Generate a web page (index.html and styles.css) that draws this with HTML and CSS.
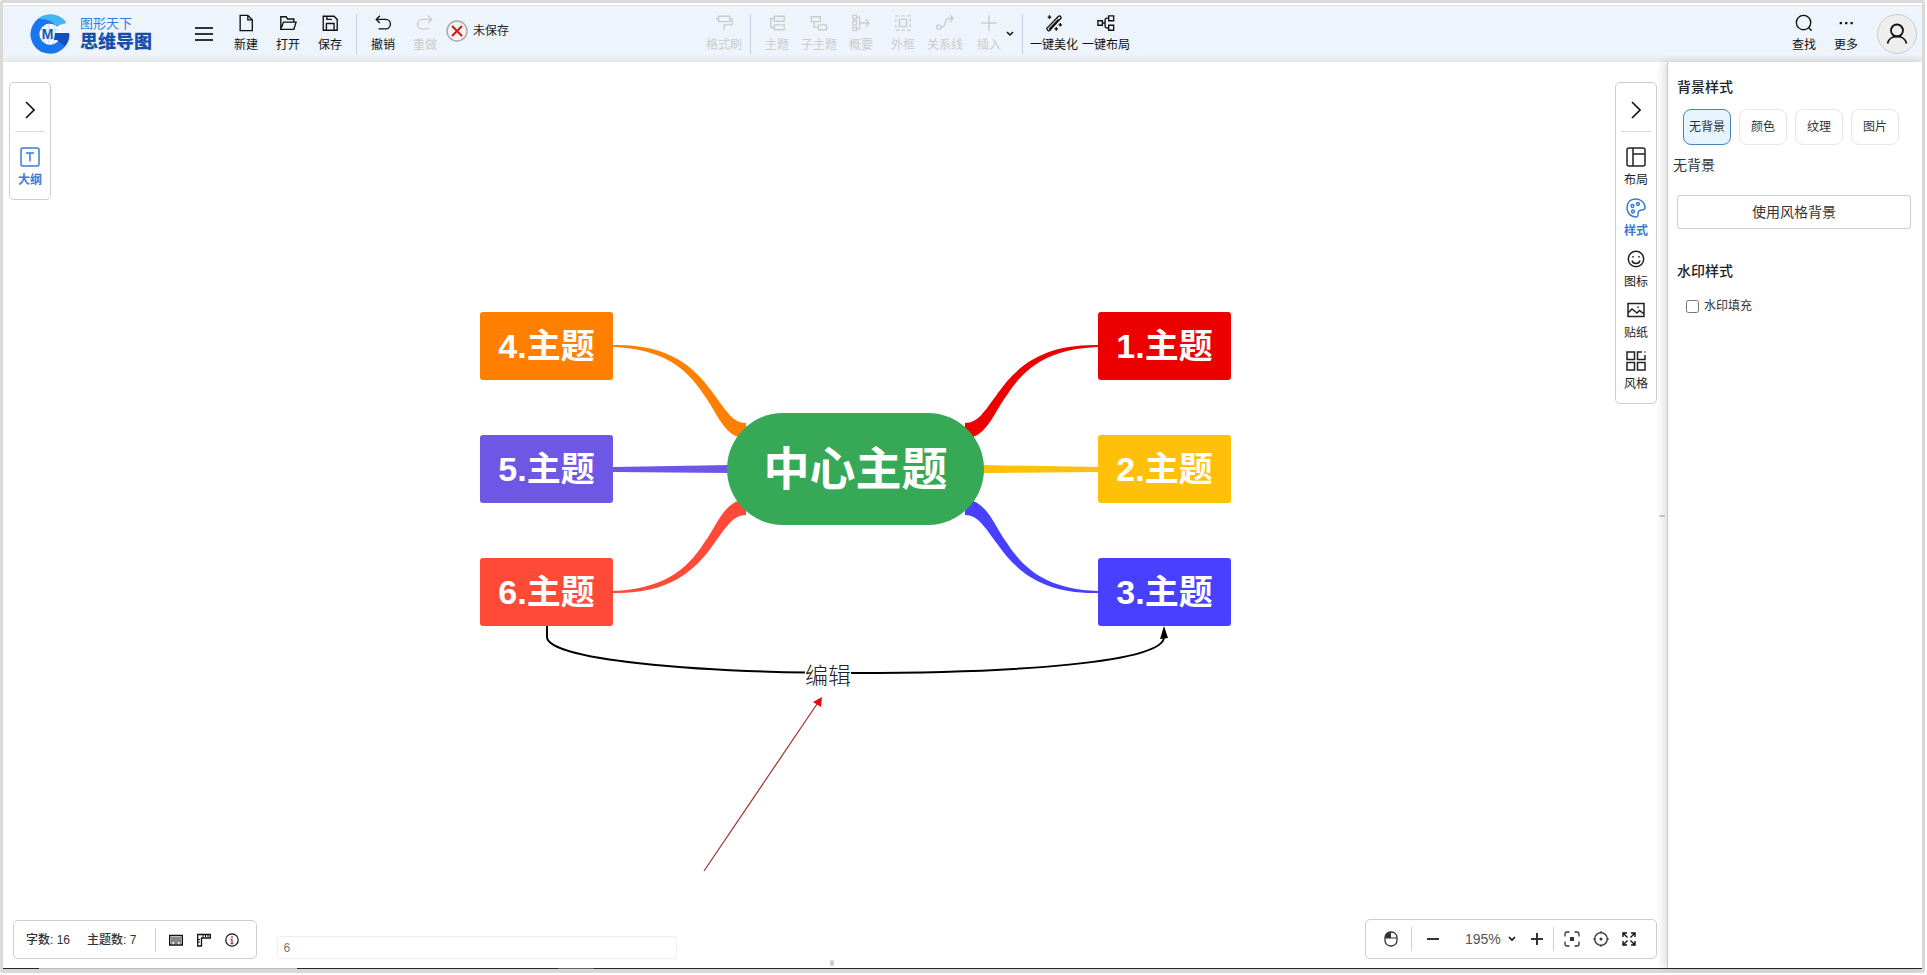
FILE: index.html
```html
<!DOCTYPE html>
<html lang="zh-CN">
<head>
<meta charset="utf-8">
<title>图形天下 思维导图</title>
<link rel="stylesheet" href="styles.css">
</head>
<body>
<div class="app">
  <header class="header">
    <a class="logo" href="#">
      <svg class="logo-mark" viewBox="0 0 40 40" aria-hidden="true">
        <circle cx="20" cy="20" r="12" fill="#fff"/>
        <path d="M19 9.500v21M9 16h20M9 25h20M15 10q-5 10 0 20M23 10q5 10 0 20" stroke="#b9d9fa" fill="none"/>
        <path d="M30.500 9.500A15 15 0 1 0 35 20" fill="none" stroke="#1a76ee" stroke-width="9"/>
        <path d="M8 5Q20-4 32 4q3 2 4.500 5L26 12Q20 4 8 5z" fill="#45b5f5"/>
        <path d="M25 19h14q1 7-4.500 13L27 26h-3z" fill="#1350bd"/>
        <text class="logo-letter" x="17.500" y="25" text-anchor="middle">M</text>
      </svg>
      <span class="logo-text"><span class="logo-brand">图形天下</span><span class="logo-name">思维导图</span></span>
    </a>
    <button class="menu" aria-label="菜单"><svg width="18" height="16" viewBox="0 0 18 16"><path d="M0 2h18M0 8h18M0 14h18" stroke="#333" stroke-width="1.800"/></svg></button>
    <div class="tools">
      <button class="tool"><svg viewBox="0 0 20 20"><path d="M3.500 1.500H12l5 5v12H3.500zM12 1.500v5h5"/></svg>新建</button>
      <button class="tool"><svg viewBox="0 0 20 20"><path d="M2 17V3h6l1.500 2.500h7V9M2 17l3-8h14l-2.500 8z"/></svg>打开</button>
      <button class="tool"><svg viewBox="0 0 20 20"><path d="M2.500 2.500h12l3.500 3.500v12H2.500zM6 18v-7.500h8.500V18M6.500 2.500v3.500H12"/></svg>保存</button>
    </div>
    <span class="rule"></span>
    <div class="tools">
      <button class="tool"><svg viewBox="0 0 20 20"><path d="M6.500 2L2.500 6l4 4M2.500 6H13a5 5 0 0 1 0 10.500H5"/></svg>撤销</button>
      <button class="tool" disabled><svg viewBox="0 0 20 20"><path d="M13.500 2l4 4-4 4M17.500 6H7a5 5 0 0 0 0 10.500h8"/></svg>重做</button>
    </div>
    <span class="status"><svg width="22" height="22" viewBox="0 0 22 22"><circle cx="11" cy="11" r="10" fill="#f3f3f5" stroke="#aaa" stroke-width="1.500"/><path d="M6 6l10 10M16 6L6 16" stroke="#d01818" stroke-width="2"/></svg>未保存</span>
    <div class="tools">
      <button class="tool" disabled><svg viewBox="0 0 20 20"><path d="M4 2.500h12.500v6H4zM4 5.500H1M16.500 5.500H19V12h-9v6"/></svg>格式刷</button>
      <span class="rule"></span>
      <button class="tool" disabled><svg viewBox="0 0 20 20"><path d="M7 2.500h11v5.500H7zM7 12h11v5.500H7zM7 5H3v10h4"/></svg>主题</button>
      <button class="tool" disabled><svg viewBox="0 0 20 20"><path d="M1.500 3h10v5.500h-10zM9.500 12h9v5.500h-9zM4.500 8.500v6h5"/></svg>子主题</button>
      <button class="tool" disabled><svg viewBox="0 0 20 20"><path d="M1 1.500h4v4H1zM1 8h4v4H1zM1 14.500h4v4H1zM5 3.500h3.500v13H5M8.500 10H19M15 6l4 4-4 4"/></svg>概要</button>
      <button class="tool" disabled><svg viewBox="0 0 20 20"><path d="M6 6h8v8H6z"/><path d="M2 2h16v16H2z" stroke-dasharray="3.500 2.833"/></svg>外框</button>
      <button class="tool" disabled><svg viewBox="0 0 20 20"><circle cx="3" cy="14.500" r="2.500"/><path d="M5.500 14.500c8 0 1.500-9.500 9-9.500H19M15.500 1.500L19 5l-3.500 3.500"/></svg>关系线</button>
      <button class="tool tool-insert" disabled><svg viewBox="0 0 20 20"><path d="M10 1.500v17M1.500 10h17"/></svg>插入</button>
      <button class="drop" aria-label="展开"><svg width="8" height="6" viewBox="0 0 8 6"><path d="M1 1l3 3 3-3" fill="none" stroke="#111" stroke-width="1.500"/></svg></button>
      <span class="rule"></span>
      <button class="tool tool-wide"><svg viewBox="0 0 20 20"><path d="M2 16L14.500 3q2-2 3 0t-1 3L5 18.500q-2 1-3-2.500zM4.500 17L15 6M5 1.500v4M3 3.500h4M17 10v4M15 12h4M12.500 14.500v4M10.500 16.500h4"/></svg>一键美化</button>
      <button class="tool tool-wide"><svg viewBox="0 0 20 20"><path d="M1 7.500h5v5H1zM13 2h5.500v5.500H13zM13 12.500h5.500V18H13zM6 10h3M13 4.500h-2q-2 0-2 2v7q0 2 2 2h2"/></svg>一键布局</button>
    </div>
    <div class="tools tools-user">
      <button class="tool"><svg viewBox="0 0 20 20"><circle cx="9.500" cy="9.500" r="8"/><path d="M15 15l3.500 3.500"/></svg>查找</button>
      <button class="tool"><svg viewBox="0 0 20 20"><path d="M3 10h2.500M9 10h2.500M15 10h2.500" stroke-width="2.500"/></svg>更多</button>
      <button class="avatar" aria-label="账户"><svg width="22" height="22" viewBox="0 0 22 22"><circle cx="11" cy="7.500" r="6"/><path d="M1.500 20.500c2-9.500 17-9.500 19 0"/></svg></button>
    </div>
  </header>

  <main class="main">
    <section class="canvas">
      <div class="map">
        <svg class="links" viewBox="0 0 752 600" aria-hidden="true">
          <defs>
            <path id="bend" d="M133 33C188 32 214 54 233 81C247 100 253 111 266 111V125H258C242 119 236 99 224 83C206 55 182 37 133 35Z"/>
            <path id="beam" d="M133 155L250 153V161L133 160Z"/>
          </defs>
          <use href="#bend" fill="#ff7f00"/>
          <use href="#beam" fill="#6f57e6"/>
          <use href="#bend" fill="#ff4a38" transform="matrix(1 0 0 -1 0 314)"/>
          <use href="#bend" fill="#ec0000" transform="matrix(-1 0 0 1 751 0)"/>
          <use href="#beam" fill="#ffc00a" transform="matrix(-1 0 0 1 751 0)"/>
          <use href="#bend" fill="#4741ff" transform="matrix(-1 0 0 -1 751 314)"/>
          <path d="M67 314V325C67 347 210 361 375 361S684 350 684 325" fill="none" stroke="#000" stroke-width="2"/>
          <path d="M684 314L680 327L688 326Z"/>
          <path d="M224 559L337 392" stroke="#a32e2e" stroke-width="1.200"/>
          <path d="M342 385L333 390L341 395Z" fill="#e80a0a"/>
        </svg>
        <div class="node root">中心主题</div>
        <div class="node n1">1.主题</div>
        <div class="node n2">2.主题</div>
        <div class="node n3">3.主题</div>
        <div class="node n4">4.主题</div>
        <div class="node n5">5.主题</div>
        <div class="node n6">6.主题</div>
        <span class="link-label">编辑</span>
      </div>

      <nav class="dock dock-left">
        <button class="dock-toggle" aria-label="展开"><svg width="10" height="18" viewBox="0 0 10 18"><path d="M1 1l8 8-8 8"/></svg></button>
        <button class="dock-item active"><svg viewBox="0 0 20 20"><rect x="1" y="1" width="18" height="18" rx="2"/><path d="M6 6h8M10 6v8.500"/></svg>大纲</button>
      </nav>

      <nav class="dock dock-right">
        <button class="dock-toggle" aria-label="收起"><svg width="10" height="18" viewBox="0 0 10 18"><path d="M1 1l8 8-8 8"/></svg></button>
        <button class="dock-item"><svg viewBox="0 0 20 20"><rect x="1" y="1" width="18" height="18" rx="2"/><path d="M7 1v18M7 7h12"/></svg>布局</button>
        <button class="dock-item active"><svg viewBox="0 0 20 20"><path d="M10 1C4 1 1 5 1 10s4 9 9 9c2 0 2-1 2-3 0-3 1-4 4-4 2 0 3-1 3-3 0-4-4-8-9-8z"/><circle cx="6.500" cy="8" r="1.400"/><circle cx="12" cy="6" r="1.400"/><circle cx="7" cy="13.500" r="1.400"/></svg>样式</button>
        <button class="dock-item"><svg viewBox="0 0 20 20"><circle cx="10" cy="10" r="7.700"/><path d="M6 11.500c1 4 7 4 8 0M7 7v1.500M13 7v1.500"/></svg>图标</button>
        <button class="dock-item"><svg viewBox="0 0 20 20"><path d="M2 3.500h16v13H2zM2 13l4-4 5 4 2.500-2.500L18 14M12 6.500v1.500"/></svg>贴纸</button>
        <button class="dock-item"><svg viewBox="0 0 20 20"><path d="M1 1h7.500v7.500H1zM1 11.500h7.500V19H1zM11.500 11.500H19V19h-7.500zM16 1h-4.500v7.500H19V4M18.500 1h1"/></svg>风格</button>
      </nav>

      <footer class="bar bar-left">
        <div class="panel stats">
          <span class="stat">字数: 16</span>
          <span class="stat">主题数: 7</span>
          <span class="split"></span>
          <button class="mini" aria-label="键盘"><svg width="14" height="14" viewBox="0 0 14 14"><path d="M.7 2.500h12.600v9.500H.7z" fill="#fff" stroke="#111" stroke-width="1.400"/><path d="M2 4h10v5H2z" fill="#888"/><path d="M2 10h1.500M5 10h4M10.500 10H12" stroke="#888" stroke-width="2"/></svg></button>
          <button class="mini" aria-label="标尺"><svg width="14" height="14" viewBox="0 0 14 14"><path d="M.7 1.500h12.600V5H4.500v8H.7z" fill="none" stroke="#111" stroke-width="1.300"/><path d="M6 2v2M8.500 2v2M11 2v2M1 6.500h2M1 9h2" stroke="#111"/></svg></button>
          <button class="mini" aria-label="信息"><svg width="14" height="14" viewBox="0 0 14 14"><circle cx="7" cy="7" r="6.200" fill="none" stroke="#111" stroke-width="1.200"/><path d="M7 3v2M5.500 6.500H7V10M5.500 10.500h3" fill="none" stroke="#a44" stroke-width="1.300"/></svg></button>
        </div>
        <input class="note" type="text" value="6" aria-label="备注">
      </footer>

      <div class="panel bar-right">
        <button class="mini mini-mouse" aria-label="鼠标模式"><svg width="14" height="16" viewBox="0 0 14 16"><rect x="1" y="1" width="12" height="14" rx="5.500" fill="none" stroke="#333" stroke-width="1.300"/><path d="M7 1v6H1Q1 1 7 1z" fill="#333"/><path d="M1 7h12" stroke="#333"/></svg></button>
        <span class="split"></span>
        <button class="mini" aria-label="缩小"><svg width="14" height="14" viewBox="0 0 14 14"><path d="M1 7h12" stroke="#333" stroke-width="2"/></svg></button>
        <label class="zoom"><select aria-label="缩放比例"><option>195%</option></select><svg width="8" height="6" viewBox="0 0 8 6"><path d="M1 1l3 3 3-3" fill="none" stroke="#111" stroke-width="1.600"/></svg></label>
        <button class="mini" aria-label="放大"><svg width="14" height="14" viewBox="0 0 14 14"><path d="M1 7h12M7 1v12" stroke="#333" stroke-width="2"/></svg></button>
        <span class="split"></span>
        <div class="view">
          <button class="mini" aria-label="适应"><svg width="16" height="16" viewBox="0 0 16 16"><path d="M1 5.500V3q0-2 2-2h2.500M10.500 1H13q2 0 2 2v2.500M15 10.500V13q0 2-2 2h-2.500M5.500 15H3q-2 0-2-2v-2.500" fill="none" stroke="#333" stroke-width="1.300"/><path d="M6 6h4v4H6z" fill="#333"/></svg></button>
          <button class="mini" aria-label="定位"><svg width="16" height="16" viewBox="0 0 16 16"><circle cx="8" cy="8" r="6.300" fill="none" stroke="#333" stroke-width="1.300"/><path d="M8 0v2.500M8 13.500V16M0 8h2.500M13.500 8H16" stroke="#333"/><circle cx="8" cy="8" r="1.500" fill="#333"/></svg></button>
          <button class="mini" aria-label="全屏"><svg width="14" height="14" viewBox="0 0 14 14"><path d="M5 1H1v4M1 1l4.500 4.500M9 1h4v4M13 1L8.500 5.500M1 9v4h4M1 13l4.500-4.500M13 9v4H9M13 13L8.500 8.500" fill="none" stroke="#111" stroke-width="1.400"/></svg></button>
        </div>
      </div>
      <span class="grip grip-side"></span>
      <span class="grip grip-bottom"></span>
    </section>

    <aside class="side">
      <h2>背景样式</h2>
      <div class="tabs">
        <button class="tab selected">无背景</button>
        <button class="tab">颜色</button>
        <button class="tab">纹理</button>
        <button class="tab">图片</button>
      </div>
      <p class="current">无背景</p>
      <button class="apply">使用风格背景</button>
      <h2>水印样式</h2>
      <label class="check"><input type="checkbox">水印填充</label>
    </aside>
  </main>
  <div class="edge"></div>
</div>
</body>
</html>
```

FILE: styles.css
```css
* { box-sizing: border-box; }

body {
  margin: 0;
  background: #fff;
  color: #222;
  font: 12px/16px "Liberation Sans", "Noto Sans CJK SC", sans-serif;
}

button, input, select {
  margin: 0;
  padding: 0;
  border: 0;
  background: none;
  color: inherit;
  font: inherit;
}

svg { display: block; }

.app {
  display: flex;
  flex-direction: column;
  height: calc(100vh - 2px);
  margin-right: 2px;
  padding-top: 2px;
  border: 3px solid #d9d9d9;
  border-radius: 3px;
}

/* Header */
.header {
  display: flex;
  align-items: flex-start;
  flex: none;
  height: 57px;
  padding: 8px 5px 0 27px;
  border-top: 1px solid #dfdfdf;
  background: linear-gradient(#edf4fb 48px, #e4e8eb 56px);
  white-space: nowrap;
}

.logo {
  display: flex;
  gap: 10px;
  width: 165px;
  text-decoration: none;
}

.logo-mark { width: 40px; height: 40px; }

.logo-letter { fill: #1c56a8; font-size: 14px; font-weight: 700; }

.logo-text { display: flex; flex-direction: column; }

.logo-brand { padding-top: 2px; color: #2f80dd; font-size: 13px; line-height: 16px; }

.logo-name { color: #1750ab; font-size: 18px; font-weight: 900; line-height: 20px; }

.menu { height: 40px; margin-right: 12px; }

.tools { display: flex; align-items: flex-start; }

.tool {
  display: flex;
  flex-direction: column;
  align-items: center;
  gap: 5px;
  width: 42px;
  color: #111;
}

.tool:disabled { color: #ccc; }

.tool svg, .dock-item svg {
  width: 18px;
  height: 18px;
  fill: none;
  stroke: currentColor;
  stroke-width: 1.5;
}

.rule {
  width: 1px;
  height: 40px;
  margin: 0 5px;
  background: #c5d0dc;
}

.status {
  display: flex;
  align-items: center;
  gap: 5px;
  width: 257px;
  height: 34px;
}

.tool-insert { width: 46px; }

.tool-wide { width: 52px; }

.drop { width: 14px; height: 40px; margin-left: -9px; }

.drop svg { margin: 0 auto; }

.tools-user { margin-left: auto; }

.avatar {
  display: grid;
  place-items: center;
  width: 40px;
  height: 40px;
  margin-left: 10px;
  border: 1px solid #ccc;
  border-radius: 50%;
  background: #eee;
}

.avatar svg { fill: none; stroke: #111; stroke-width: 1.8; }

/* Workspace */
.main { display: flex; flex: 1; min-height: 0; }

.canvas {
  position: relative;
  flex: 1;
  min-width: 0;
  overflow: hidden;
}

.edge {
  flex: none;
  height: 2px;
  background:
    linear-gradient(90deg, #1f2b33 36px, #bdbdbd 36px, #bdbdbd 294px, #1f2b33 294px, #1f2b33 555px, #5d6663 555px, #5d6663 591px, #1f2b33 591px) top / 100% 1px no-repeat #d9d9d9;
}

.map {
  position: absolute;
  top: calc(50% - 203px);
  left: calc(50% - 355px);
  width: 752px;
  height: 600px;
}

.links { width: 100%; height: 100%; }

.node {
  position: absolute;
  display: grid;
  place-items: center;
  width: 133px;
  height: 68px;
  border-radius: 3px;
  color: #fff;
  font-size: 34px;
  font-weight: 700;
  line-height: 40px;
}

.root { top: 101px; left: 247px; width: 257px; height: 112px; border-radius: 56px; background: #37a956; font-size: 46px; }
.n1 { top: 0; left: 618px; background: #ec0000; }
.n2 { top: 123px; left: 618px; background: #ffc00a; }
.n3 { top: 246px; left: 618px; background: #4741ff; }
.n4 { top: 0; left: 0; background: #ff7f00; }
.n5 { top: 123px; left: 0; background: #6f57e6; }
.n6 { top: 246px; left: 0; background: #ff4a38; }

.link-label {
  position: absolute;
  top: 350px;
  left: 325px;
  background: #fff;
  font-family: "Noto Sans CJK SC", sans-serif;
  font-size: 23px;
  font-weight: 300;
  line-height: 24px;
}

/* Floating docks */
.dock {
  position: absolute;
  top: 20px;
  display: flex;
  flex-direction: column;
  align-items: center;
  padding: 0 5px 4px;
  border: 1px solid #ccc;
  border-radius: 5px;
  background: #fff;
}

.dock-left { left: 6px; width: 42px; }

.dock-right { right: 10px; width: 42px; }

.dock-toggle {
  width: 100%;
  height: 49px;
  margin-bottom: 12px;
  padding-top: 6px;
  border-bottom: 1px solid #d5dce0;
}

.dock-toggle svg { margin: 0 auto; fill: none; stroke: #111; stroke-width: 1.6; }

.dock-item {
  display: flex;
  flex-direction: column;
  align-items: center;
  gap: 5px;
  height: 51px;
  padding-top: 3px;
}

.dock-item svg { width: 20px; height: 20px; }

.active { color: #3b7bd3; font-weight: 700; }

/* Bottom bars */
.panel {
  display: flex;
  align-items: center;
  border: 1px solid #ccc;
  border-radius: 5px;
  background: #fff;
}

.bar { position: absolute; bottom: 9px; left: 10px; display: flex; align-items: flex-end; gap: 20px; }

.stats { height: 39px; padding: 0 17px 0 12px; }

.stat { margin-right: 17px; color: #333; font-weight: 500; }

.stat + .split { margin-left: 2px; }

.stats .mini { margin-left: 14px; }

.stats .split { margin-right: -1px; }

.note {
  width: 400px;
  height: 23px;
  padding: 0 5px;
  border: 1px solid #eee;
  border-radius: 3px;
  color: #777;
}

.split { width: 1px; height: 24px; background: #c8d2d5; }

.bar-right { position: absolute; right: 10px; bottom: 9px; height: 40px; padding: 0 20px 0 18px; }

.bar-right > .mini { margin: 0 9px 0 14px; }

.bar-right > .mini-mouse { margin: 0 13px 0 0; }

.zoom {
  display: flex;
  align-items: center;
  gap: 7px;
  padding-left: 16px;
  color: #555;
  font-size: 14px;
}

.zoom select { appearance: none; width: 36px; }

.view { display: flex; align-items: center; gap: 13px; margin-left: 10px; }

.grip { position: absolute; border-radius: 2px; background: #ccc; }

.grip-side { right: 2px; top: 50%; width: 6px; height: 2px; }

.grip-bottom { bottom: 2px; left: calc(50% - 5px); width: 4px; height: 6px; }

/* Side panel */
.side {
  width: 255px;
  padding: 15px 11px 0 9px;
  border-left: 1px solid #c9c5c5;
  box-shadow: -4px 0 8px #0000001f;
  z-index: 1;
  background: #fff;
}

h2 { margin: 0; font-size: 14px; font-weight: 500; line-height: 20px; }

.tabs { display: flex; gap: 8px; margin: 12px 0 10px 6px; }

.tab {
  width: 48px;
  height: 36px;
  border: 1px solid #e6e6e6;
  border-radius: 8px;
  color: #333;
}

.selected { border-color: #4b83b8; background: #e6f4ff; }

.current { margin: 0 0 20px -4px; color: #333; font-size: 14px; line-height: 20px; }

.apply {
  width: 100%;
  height: 34px;
  margin-bottom: 32px;
  border: 1px solid #ccc;
  border-radius: 3px;
  color: #333;
  font-size: 14px;
}

.check { display: flex; align-items: center; gap: 5px; margin: 17px 0 0 9px; color: #333; }

.check input { width: 13px; height: 13px; }
```
